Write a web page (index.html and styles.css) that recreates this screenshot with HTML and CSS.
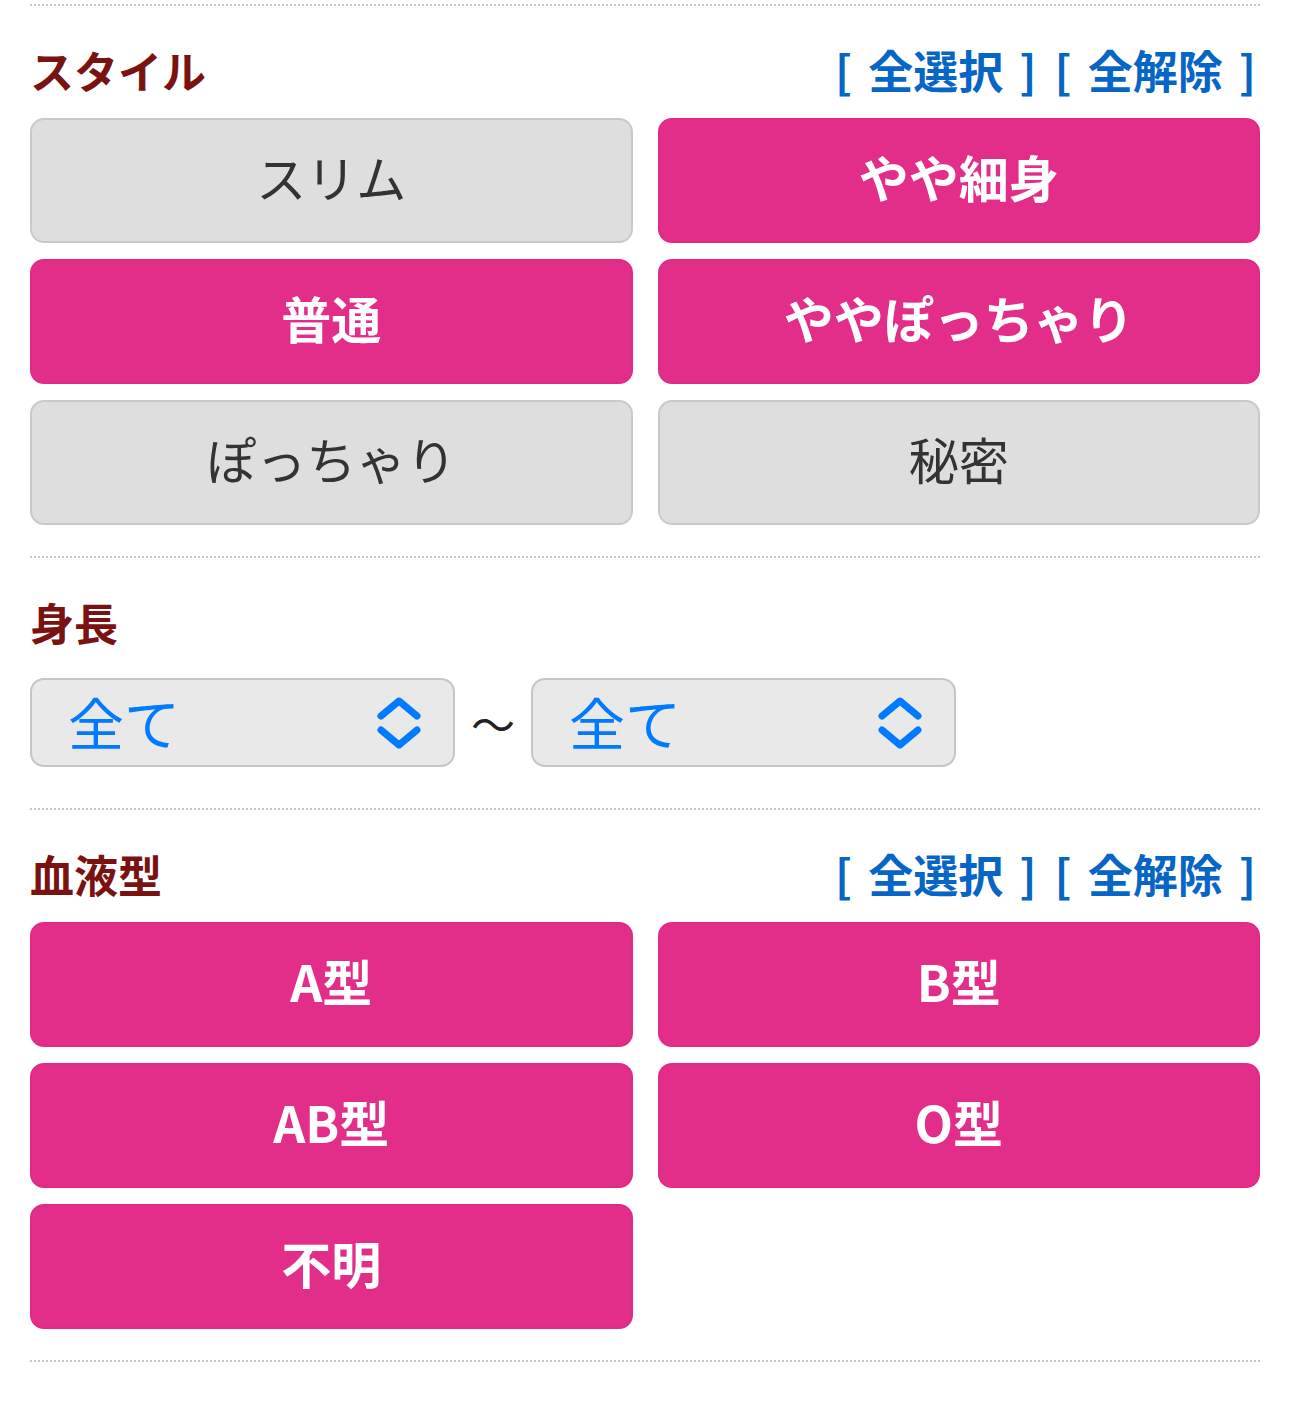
FILE: index.html
```html
<!DOCTYPE html>
<html lang="ja">
<head>
    <meta charset="UTF-8">
    <meta name="viewport" content="width=device-width, initial-scale=1.0">
    <title>検索条件</title>
    <link rel="stylesheet" href="styles.css">
</head>
<body>
    <div class="wrap">
        <hr class="divider">

        <section class="field">
            <div class="field-head">
                <h2>スタイル</h2>
                <div class="bulk">
                    <a href="#">[ 全選択 ]</a>
                    <a href="#">[ 全解除 ]</a>
                </div>
            </div>
            <div class="choices">
                <button class="chip">スリム</button>
                <button class="chip on">やや細身</button>
                <button class="chip on">普通</button>
                <button class="chip on">ややぽっちゃり</button>
                <button class="chip">ぽっちゃり</button>
                <button class="chip">秘密</button>
            </div>
        </section>

        <hr class="divider">

        <section class="field">
            <div class="field-head">
                <h2>身長</h2>
            </div>
            <div class="range">
                <div class="picker">
                    <span>全て</span>
                    <svg width="44" height="52" viewBox="0 0 44 52">
                        <path d="M4 19 L22 4 L40 19 M4 33 L22 48 L40 33" fill="none" stroke="#007aff" stroke-width="7" stroke-linecap="round" stroke-linejoin="round"/>
                    </svg>
                </div>
                <span class="tilde">～</span>
                <div class="picker">
                    <span>全て</span>
                    <svg width="44" height="52" viewBox="0 0 44 52">
                        <path d="M4 19 L22 4 L40 19 M4 33 L22 48 L40 33" fill="none" stroke="#007aff" stroke-width="7" stroke-linecap="round" stroke-linejoin="round"/>
                    </svg>
                </div>
            </div>
        </section>

        <hr class="divider">

        <section class="field">
            <div class="field-head">
                <h2>血液型</h2>
                <div class="bulk">
                    <a href="#">[ 全選択 ]</a>
                    <a href="#">[ 全解除 ]</a>
                </div>
            </div>
            <div class="choices">
                <button class="chip on">A型</button>
                <button class="chip on">B型</button>
                <button class="chip on">AB型</button>
                <button class="chip on">O型</button>
                <button class="chip on">不明</button>
            </div>
        </section>

        <hr class="divider">

        <section class="field">
            <div class="field-head">
                <h2>年収</h2>
            </div>
        </section>
    </div>
</body>
</html>
```

FILE: styles.css
```css
body {
    margin: 0;
    font-family: "Noto Sans CJK JP", "Noto Sans", sans-serif;
    background: #fff;
    color: #333;
}
.wrap {
    padding: 4px 30px 0;
}
.divider {
    border: 0;
    border-top: 2px dotted #c4c4c4;
    margin: 0;
}
.field {
    padding: 38px 0 31px;
}
.field-head {
    display: flex;
    justify-content: space-between;
    align-items: center;
    margin-bottom: 22px;
}
.field-head h2 {
    margin: 0;
    font-size: 44px;
    line-height: 52px;
    font-weight: 700;
    color: #7a1212;
}
.bulk {
    display: flex;
    gap: 18px;
    padding-right: 4px;
}
.bulk a {
    font-size: 45px;
    line-height: 52px;
    font-weight: 700;
    word-spacing: 6px;
    color: #0765c6;
    text-decoration: none;
}
.choices {
    display: grid;
    grid-template-columns: 1fr 1fr;
    column-gap: 25px;
    row-gap: 16px;
}
.chip {
    height: 125px;
    border: 2px solid #c9c9c9;
    border-radius: 14px;
    background: #dedede;
    color: #333;
    font-family: inherit;
    font-size: 50px;
    font-weight: 400;
    padding: 0 0 9px;
}
.chip.on {
    background: #e32e89;
    border-color: #e02a86;
    color: #fff;
    font-weight: 700;
}
.range {
    display: flex;
    align-items: center;
    gap: 16px;
    margin-top: 30px;
    padding-bottom: 10px;
}
.picker {
    width: 425px;
    height: 89px;
    box-sizing: border-box;
    display: flex;
    align-items: center;
    justify-content: space-between;
    padding: 0 32px 4px 36px;
    background: #e9e9e9;
    border: 2px solid #c6c6c6;
    border-radius: 14px;
    color: #007aff;
    font-size: 56px;
}
.picker svg {
    margin-top: 4px;
}
.tilde {
    font-size: 44px;
    color: #222;
}
```
